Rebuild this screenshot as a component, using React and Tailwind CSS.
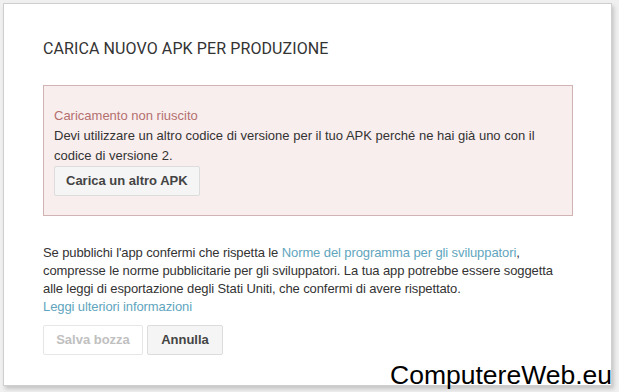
export default function App() {
  const body = { fontFamily: '"Liberation Sans", Arial, sans-serif' };

  return (
    <div className="relative w-[619px] h-[392px] overflow-hidden bg-[#f0f0f0]" style={body}>
      <div className="ml-[3px] mt-[3px] w-[609px] h-[383px] bg-white border border-[#cfcfcf] shadow-[2px_3px_4px_rgba(0,0,0,0.18)] px-[39px]">
        <h1
          className="pt-[35px] text-[16px] leading-[20px] text-[#333] tracking-[0.1px]"
          style={{ fontFamily: 'Roboto, "Liberation Sans", sans-serif' }}
        >
          CARICA NUOVO APK PER PRODUZIONE
        </h1>

        <div className="mt-[26px] w-[530px] border border-[#d2b3b3] bg-[#f9eeee] px-[10px] pt-[20px] pb-[19px] text-[13px] leading-[20px]">
          <p className="text-[#b3706e]">Caricamento non riuscito</p>
          <p className="text-[#333]">
            Devi utilizzare un altro codice di versione per il tuo APK perché ne hai già uno con il codice di
            versione 2.
          </p>
          <button className="h-[30px] px-[11px] rounded-[2px] border border-[#dcdcdc] bg-[#f5f5f5] text-[13px] font-bold text-[#444]">
            Carica un altro APK
          </button>
        </div>

        <p className="mt-[28px] w-[530px] whitespace-nowrap text-[13px] tracking-[-0.1px] leading-[18px] text-[#333]">
          Se pubblichi l'app confermi che rispetta le{" "}
          <span className="text-[#5fa5be]">Norme del programma per gli sviluppatori</span>,
          <br />
          compresse le norme pubblicitarie per gli sviluppatori. La tua app potrebbe essere soggetta
          <br />
          alle leggi di esportazione degli Stati Uniti, che confermi di avere rispettato.
          <br />
          <span className="text-[#5fa5be]">Leggi ulteriori informazioni</span>
        </p>

        <div className="mt-[9px] flex gap-[4px]">
          <button className="h-[30px] w-[100px] rounded-[2px] border border-[#e6e6e6] bg-white text-[13px] font-bold text-[#c0c0c0]">
            Salva bozza
          </button>
          <button className="h-[30px] w-[76px] rounded-[2px] border border-[#dcdcdc] bg-[#f5f5f5] text-[13px] font-bold text-[#444]">
            Annulla
          </button>
        </div>
      </div>

      <div className="absolute right-[7px] bottom-[2px] text-[26.5px] leading-[30px] text-black">ComputereWeb.eu</div>
    </div>
  );
}
